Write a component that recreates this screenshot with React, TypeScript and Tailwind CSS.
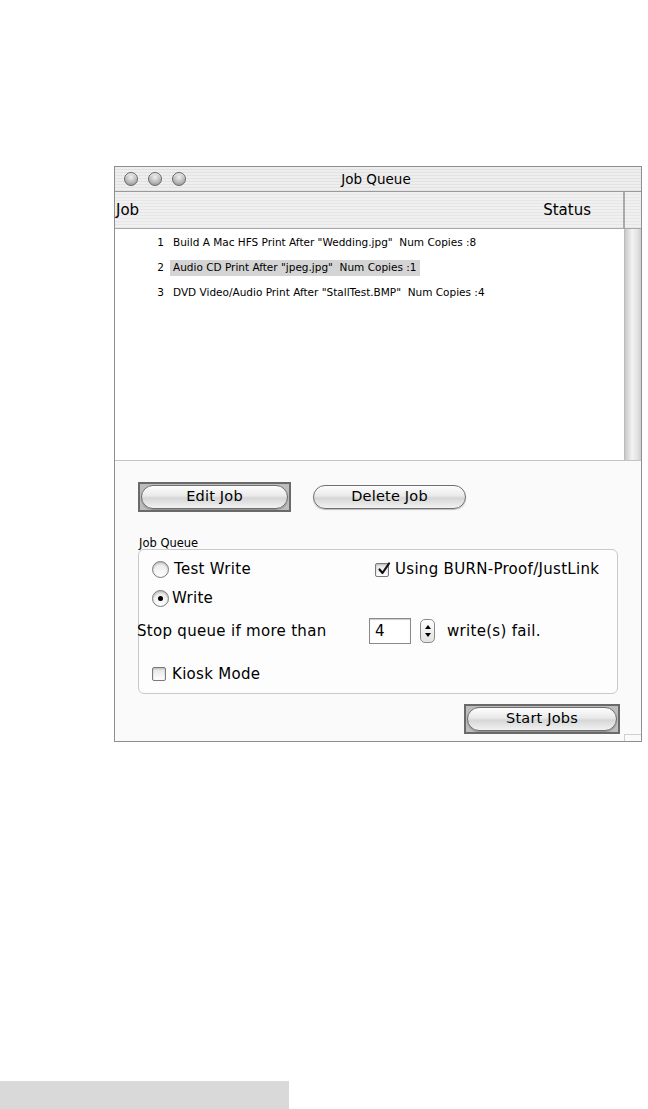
import React from "react";

const ui = "font-['DejaVu_Sans','Open_Sans',sans-serif]";

function Light() {
  return (
    <span className="h-[14px] w-[14px] rounded-full border border-[#666666] bg-[radial-gradient(circle_at_50%_35%,#f0f0f0,#b3b3b3_60%,#858585)] shadow-[inset_0_1px_1px_rgba(255,255,255,0.8)]" />
  );
}

function PillButton({
  label,
  width,
  isDefault = false,
}: {
  label: string;
  width: string;
  isDefault?: boolean;
}) {
  const pill = (
    <div
      className={`flex h-[24px] items-center justify-center rounded-full border border-[#6f6f6f] bg-[linear-gradient(#fdfdfd,#e9e9e9_45%,#d6d6d6_55%,#f2f2f2)] text-[14.5px] tracking-[0.2px] text-black shadow-[0_1px_1px_rgba(0,0,0,0.25)] ${width}`}
    >
      {label}
    </div>
  );
  if (!isDefault) return pill;
  return <div className="border-[2px] border-[#6a6a6a] bg-[#bdbdbd] p-[1px]">{pill}</div>;
}

function Radio({ on }: { on?: boolean }) {
  return (
    <span className="flex h-[17px] w-[17px] items-center justify-center rounded-full border border-[#7a7a7a] bg-[linear-gradient(#e6e6e6,#ffffff)] shadow-[inset_0_1px_2px_rgba(0,0,0,0.25)]">
      {on && <span className="h-[5px] w-[5px] rounded-full bg-black" />}
    </span>
  );
}

function Check({ on }: { on?: boolean }) {
  return (
    <span className="relative flex h-[14px] w-[14px] items-center justify-center rounded-[2px] border border-[#7a7a7a] bg-[linear-gradient(#e3e3e3,#ffffff)] shadow-[inset_0_1px_2px_rgba(0,0,0,0.2)]">
      {on && (
        <svg width="14" height="14" viewBox="0 0 14 14" className="absolute -top-[2px] left-[1px]">
          <path d="M2.5 7.5 L5.5 11 L12 1.5" fill="none" stroke="#111" strokeWidth="2.2" strokeLinecap="round" strokeLinejoin="round" />
        </svg>
      )}
    </span>
  );
}

const jobs = [
  { n: 1, text: 'Build A Mac HFS Print After "Wedding.jpg"  Num Copies :8' },
  { n: 2, text: 'Audio CD Print After "jpeg.jpg"  Num Copies :1', selected: true },
  { n: 3, text: 'DVD Video/Audio Print After "StallTest.BMP"  Num Copies :4' },
];

export default function App() {
  return (
    <div className={`flex h-[1109px] w-[648px] flex-col bg-white ${ui}`}>
      <div className="ml-[114px] mt-[166px] flex w-[528px] flex-col border border-[#8e8e8e]">
        {/* title bar */}
        <div className="relative flex h-[25px] items-center border-b border-[#9a9a9a] bg-[repeating-linear-gradient(#eeeeee_0px,#eeeeee_2px,#e2e2e2_2px,#e2e2e2_3px)] px-[9px]">
          <div className="flex gap-[10px]">
            <Light />
            <Light />
            <Light />
          </div>
          <div className="flex-1 pr-[66px] text-center text-[13.5px] text-black">Job Queue</div>
        </div>

        {/* column header */}
        <div className="flex h-[37px] border-b border-[#a8a8a8] bg-[repeating-linear-gradient(#f0f0f0_0px,#f0f0f0_2px,#e6e6e6_2px,#e6e6e6_3px)]">
          <div className="flex flex-1 items-center justify-between pl-[1px] pr-[32px] text-[15px] text-black">
            <span>Job</span>
            <span>Status</span>
          </div>
          <div className="w-[18px] border-l-[2px] border-[#a9a9a9]" />
        </div>

        {/* list */}
        <div className="flex h-[232px] border-b border-[#c4c4c4] bg-white">
          <div className="flex flex-1 flex-col gap-[8px] pt-[5px] text-[10.5px] text-black">
            {jobs.map((j) => (
              <div key={j.n} className="flex h-[17px] items-center">
                <span className="w-[55px] pr-[6px] text-right">{j.n}</span>
                <span
                  className={`flex h-[16px] items-center whitespace-pre px-[3px] ${j.selected ? "bg-[#d4d4d4]" : ""}`}
                >
                  {j.text}
                </span>
              </div>
            ))}
          </div>
          <div className="w-[17px] border-l border-[#bdbdbd] bg-[linear-gradient(90deg,#c9c9c9,#f3f3f3_45%,#e1e1e1_80%,#cfcfcf)]" />
        </div>

        {/* controls */}
        <div className="relative flex flex-col bg-[#fafafa] pb-[7px] pl-[23px] text-[15px] tracking-[0.3px] text-black">
          <div className="mt-[21px] flex items-center gap-[22px]">
            <PillButton label="Edit Job" width="w-[147px]" isDefault />
            <PillButton label="Delete Job" width="w-[153px]" />
          </div>

          <div className="mt-[25px] pl-[1px] text-[11.5px] leading-[12px] tracking-normal">Job Queue</div>
          <div className="mr-[23px] flex h-[145px] flex-col rounded-[6px] border border-[#c9c9c9] bg-[#fdfdfd] pl-[13px] pt-[7px]">
            <div className="flex h-[25px] items-center">
              <div className="flex w-[223px] items-center gap-[5px]">
                <Radio />
                <span>Test Write</span>
              </div>
              <div className="flex items-center gap-[6px]">
                <Check on />
                <span>Using BURN-Proof/JustLink</span>
              </div>
            </div>
            <div className="mt-[4px] flex h-[25px] items-center gap-[3px]">
              <Radio on />
              <span>Write</span>
            </div>
            <div className="mt-[6px] flex h-[28px] items-center">
              <span className="-ml-[15px] w-[232px]">Stop queue if more than</span>
              <div className="flex h-[26px] w-[42px] items-center border border-[#8a8a8a] bg-white pl-[5px] shadow-[inset_0_1px_1px_rgba(0,0,0,0.2)]">
                4
              </div>
              <div className="ml-[9px] flex h-[24px] w-[15px] flex-col items-center justify-center gap-[4px] rounded-[5px] border border-[#8a8a8a] bg-[linear-gradient(#ffffff,#e2e2e2)]">
                <span className="h-0 w-0 border-x-[3px] border-b-[4px] border-x-transparent border-b-black" />
                <span className="h-0 w-0 border-x-[3px] border-t-[4px] border-x-transparent border-t-black" />
              </div>
              <span className="ml-[12px]">write(s) fail.</span>
            </div>
            <div className="mt-[18px] flex h-[22px] items-center gap-[6px]">
              <Check />
              <span>Kiosk Mode</span>
            </div>
          </div>

          <div className="mr-[21px] mt-[10px] flex justify-end">
            <PillButton label="Start Jobs" width="w-[150px]" isDefault />
          </div>
          <div className="absolute bottom-0 right-0 h-[7px] w-[17px] border-l border-t border-[#cfcfcf]" />
        </div>
      </div>

      <div className="mt-auto h-[28px] w-[289px] bg-[#d9d9d9]" />
    </div>
  );
}
